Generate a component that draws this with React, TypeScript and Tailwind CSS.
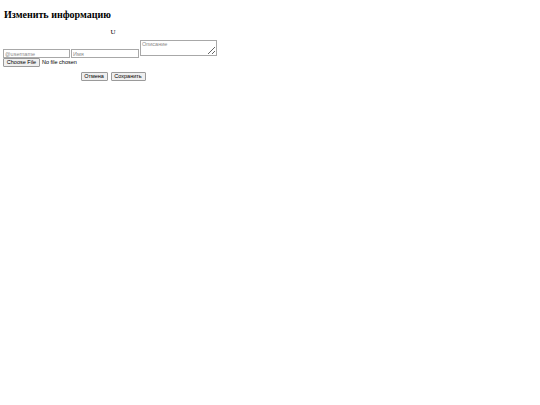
// Profile edit form, rendered at the small scale of the screenshot.
export default function App() {
  const field =
    "h-[9px] border border-[#a8a8a8] bg-white px-[1px] text-[5.5px] leading-[7px] text-black placeholder:text-[#8a8a8a] outline-none";
  const btn =
    "h-[9px] rounded-[1px] border border-[#9a9a9a] bg-[#efefef] px-[2px] text-[5.5px] leading-[7px] text-black";

  return (
    <div className="min-h-[405px] w-[540px] bg-white pl-[3px] font-['Liberation_Sans',Arial,sans-serif] text-black">
      <h2 className="pt-[9px] pl-[1px] font-['Liberation_Serif','Times_New_Roman',serif] text-[10px] leading-[12px] font-bold">
        Изменить информацию
      </h2>

      <form className="mt-[7px] flex w-[220px] flex-col">
        <div className="text-center font-['Liberation_Serif','Times_New_Roman',serif] text-[7px] leading-[8px]">
          U
        </div>

        <div className="mt-[4px] flex items-end gap-[1px]">
          <input className={`${field} w-[67px]`} placeholder="@username" />
          <input className={`${field} w-[68px]`} placeholder="Имя" />
          <textarea
            className={`${field} mb-[2px] h-[16px] w-[77px] resize-y`}
            placeholder="Описание"
          />
        </div>

        <div className="flex items-center gap-[2px]">
          <button type="button" className={`${btn} w-[37px]`}>
            Choose File
          </button>
          <span className="text-[5.5px] leading-[7px]">No file chosen</span>
        </div>

        <div className="mt-[5px] flex justify-center gap-[3px]">
          <button type="button" className={`${btn} w-[27px]`}>
            Отмена
          </button>
          <button type="button" className={`${btn} w-[35px]`}>
            Сохранить
          </button>
        </div>
      </form>
    </div>
  );
}
